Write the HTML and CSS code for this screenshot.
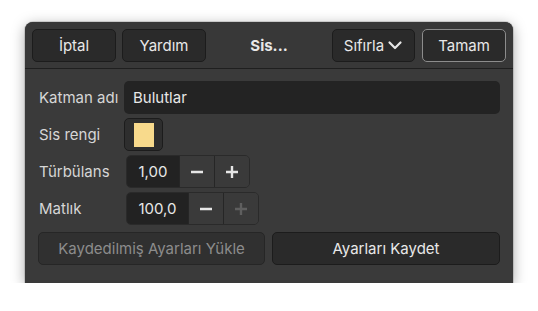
FILE: index.html
```html
<!DOCTYPE html>
<html>
<head>
    <meta charset="utf-8">
    <title>Sis</title>
    <link rel="stylesheet" href="styles.css">
</head>
<body>
    <div class="dialog">
        <div class="header">
            <button class="btn">İptal</button>
            <button class="btn">Yardım</button>
            <div class="title">Sis...</div>
            <button class="btn reset">Sıfırla
                <svg width="16" height="16" viewBox="0 0 16 16"><path d="M2.5 5.5 L8 11 L13.5 5.5" fill="none" stroke="#e6e6e6" stroke-width="2.2" stroke-linecap="round" stroke-linejoin="round"/></svg>
            </button>
            <button class="btn ok">Tamam</button>
        </div>
        <div class="content">
            <div class="row">
                <span class="label">Katman adı</span>
                <div class="entry">Bulutlar</div>
            </div>
            <div class="row">
                <span class="label">Sis rengi</span>
                <div class="color-btn"><span class="swatch"></span></div>
            </div>
            <div class="row">
                <span class="label">Türbülans</span>
                <div class="spin">
                    <span class="spin-value w1">1,00</span>
                    <span class="spin-btn">
                        <svg width="14" height="14" viewBox="0 0 14 14"><path d="M1 7 H13" stroke="#e6e6e6" stroke-width="2.4"/></svg>
                    </span>
                    <span class="spin-btn">
                        <svg width="14" height="14" viewBox="0 0 14 14"><path d="M1 7 H13 M7 1 V13" stroke="#e6e6e6" stroke-width="2.4"/></svg>
                    </span>
                </div>
            </div>
            <div class="row">
                <span class="label">Matlık</span>
                <div class="spin">
                    <span class="spin-value w2">100,0</span>
                    <span class="spin-btn">
                        <svg width="14" height="14" viewBox="0 0 14 14"><path d="M1 7 H13" stroke="#e6e6e6" stroke-width="2.4"/></svg>
                    </span>
                    <span class="spin-btn">
                        <svg width="14" height="14" viewBox="0 0 14 14"><path d="M1 7 H13 M7 1 V13" stroke="#5f5f5f" stroke-width="2.4"/></svg>
                    </span>
                </div>
            </div>
            <div class="actions">
                <button class="btn wide disabled">Kaydedilmiş Ayarları Yükle</button>
                <button class="btn wide">Ayarları Kaydet</button>
            </div>
        </div>
    </div>
</body>
</html>
```
FILE: styles.css
```css
* { box-sizing: border-box; }
html, body { margin: 0; padding: 0; }
body { background: #ffffff; font-family: Inter, "Noto Sans", sans-serif; font-size: 15px; color: #e8e8e8; padding: 22px 0 0 25px; }

.dialog { width: 488px; height: 261px; background: #3a3a3a; border-radius: 8px 8px 0 0; box-shadow: 0 3px 14px rgba(0,0,0,0.35), 0 0 0 1px rgba(0,0,0,0.12); display: flex; flex-direction: column; }

.header { height: 47px; display: flex; align-items: center; padding: 0 7px; gap: 6px; border-bottom: 1px solid #1f1f1f; background: #383838; border-radius: 8px 8px 0 0; }
.title { flex: 1; text-align: center; font-weight: 700; }

.btn { height: 33px; width: 84px; background: #2a2a2a; border: 1px solid #1c1c1c; border-radius: 5px; color: #e8e8e8; font-family: inherit; font-size: 15px; padding: 0; display: flex; align-items: center; justify-content: center; }
.reset { width: 83px; gap: 3px; margin-right: 1px; }
.ok { border-color: #8c8c8c; }

.content { padding: 12px 13px 0 14px; display: flex; flex-direction: column; gap: 4px; }
.row { display: flex; align-items: center; height: 33px; }
.label { width: 85px; color: #d6d6d6; }

.entry { flex: 1; height: 33px; background: #232323; border-radius: 5px; padding: 0 9px; display: flex; align-items: center; }

.color-btn { width: 39px; height: 33px; border: 1px solid #1c1c1c; background: #2e2e2e; border-radius: 5px; display: flex; align-items: center; justify-content: center; }
.swatch { width: 20px; height: 24px; background: #f8da8c; }

.spin { display: flex; height: 33px; margin-left: 2px; border: 1px solid #2a2a2a; border-radius: 5px; overflow: hidden; }
.spin-value { background: #222222; display: flex; align-items: center; justify-content: center; }
.w1 { width: 52px; }
.w2 { width: 61px; }
.spin-btn { width: 35px; background: #3a3a3a; border-left: 1px solid #262626; display: flex; align-items: center; justify-content: center; }

.actions { display: flex; gap: 7px; margin-top: 3px; margin-left: -1px; }
.wide { width: 227px; height: 33px; }
.wide + .wide { width: 228px; }
.disabled { background: #303030; color: #8c8c8c; border-color: #262626; }
```
